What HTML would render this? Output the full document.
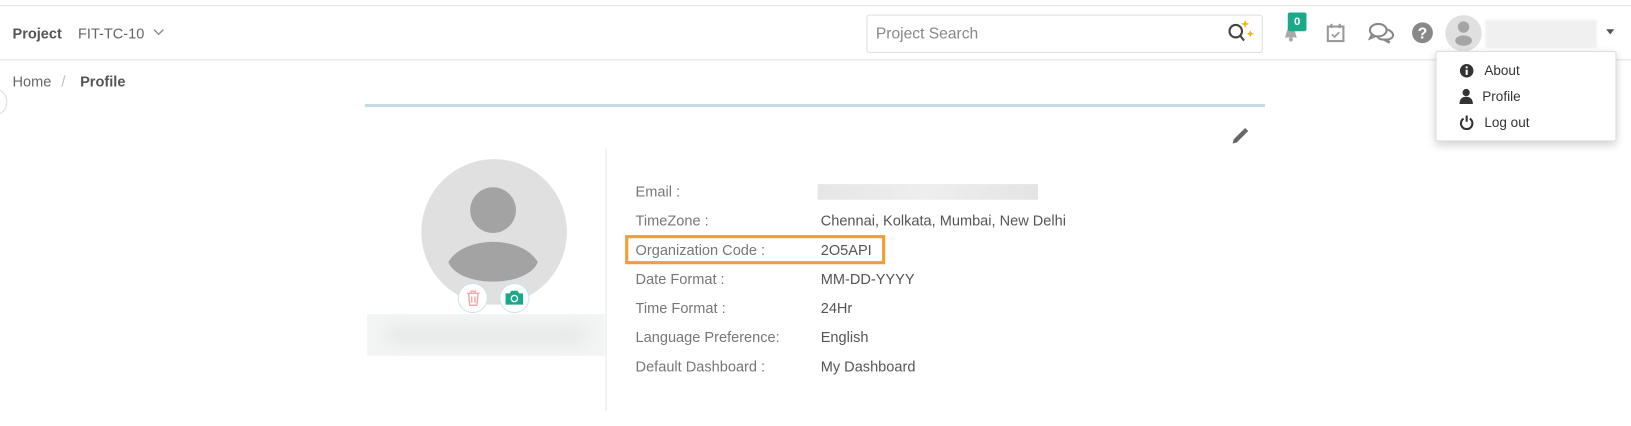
<!DOCTYPE html>
<html><head><meta charset="utf-8"><style>
*{box-sizing:border-box;margin:0;padding:0}
body{width:1631px;height:426px;background:#fff;font-family:"Liberation Sans",sans-serif;color:#555;position:relative;overflow:hidden;font-size:14px}
#w{position:absolute;left:0;top:0;width:1568px;height:410px;transform:scale(1.0402);transform-origin:0 0}
.a{position:absolute}
.lbl{position:absolute;left:611px;color:#777;font-size:14px}
.val{position:absolute;left:789px;color:#555;font-size:14px}
</style></head><body><div id="w">
<div class="a" style="left:0;top:5px;width:1568px;height:1px;background:#e2e2e2"></div>
<div class="a" style="left:0;top:57px;width:1568px;height:1px;background:#e2e2e2"></div>
<div class="a" style="left:12px;top:24px;font-weight:bold;color:#555;font-size:14px">Project</div>
<div class="a" style="left:75px;top:24px;color:#666;font-size:14px">FIT-TC-10</div>
<svg class="a" style="left:147px;top:27px" width="11" height="8"><path d="M1 1.5L5.5 6 10 1.5" stroke="#888" fill="none" stroke-width="1.3"/></svg>
<div class="a" style="left:833px;top:14px;width:381px;height:37px;border:1px solid #ddd;border-radius:3px"></div>
<div class="a" style="left:842px;top:24px;color:#888;font-size:15px">Project Search</div>
<svg class="a" style="left:1178px;top:16px" width="30" height="28"><circle cx="10" cy="14" r="6" stroke="#444" stroke-width="2" fill="none"/><path d="M14 18l4 5" stroke="#444" stroke-width="2"/><path d="M19 3l1 3 3 1-3 1-1 3-1-3-3-1 3-1z" fill="#f5b400"/><path d="M24 13l1 2.5 2.5 1-2.5 1-1 2.5-1-2.5-2.5-1 2.5-1z" fill="#f5b400"/></svg>
<svg class="a" style="left:1232px;top:22px" width="18" height="20"><path d="M3 14c2-2 1-9 6-9s4 7 6 9z" fill="#aaa"/><circle cx="9" cy="16" r="2" fill="#aaa"/></svg>
<div class="a" style="left:1238px;top:12px;width:18px;height:18px;background:#1aaa8a;border-radius:2px;color:#fff;font-size:11px;font-weight:bold;text-align:center;line-height:18px">0</div>
<svg class="a" style="left:1275px;top:22px" width="18" height="20"><rect x="1.5" y="3.5" width="15" height="14" fill="none" stroke="#999" stroke-width="2"/><path d="M5 1v4M13 1v4" stroke="#999" stroke-width="2"/><path d="M5.5 11l2.5 2.5 4.5-4.5" stroke="#999" stroke-width="1.6" fill="none"/></svg>
<svg class="a" style="left:1315px;top:20px" width="28" height="22"><ellipse cx="10" cy="9" rx="8" ry="6" fill="none" stroke="#888" stroke-width="2"/><path d="M4 13l-2 4 5-2" fill="none" stroke="#888" stroke-width="2"/><path d="M17 8c5 1 8 4 7 7-1 2-3 3-6 3l3 3-6-3c-3 0-5-1-6-3" fill="none" stroke="#888" stroke-width="2"/></svg>
<svg class="a" style="left:1357px;top:21px" width="21" height="21"><circle cx="10.5" cy="10.5" r="10" fill="#888"/><text x="10.5" y="16" font-family="Liberation Sans" font-weight="bold" font-size="15" fill="#fff" text-anchor="middle">?</text></svg>
<svg class="a" style="left:1389px;top:14px" width="36" height="36"><circle cx="18" cy="18" r="17.5" fill="#e0e0e0"/><circle cx="18" cy="12" r="5.5" fill="#a5a5a5"/><ellipse cx="18" cy="25" rx="8" ry="5" fill="#a5a5a5"/></svg>
<div class="a" style="left:1428px;top:19px;width:107px;height:27px;background:#f0f0f0;filter:blur(1px)"></div>
<svg class="a" style="left:1544px;top:28px" width="9" height="6"><path d="M0 0h8L4 5z" fill="#555"/></svg>
<div class="a" style="left:1380px;top:49px;width:174px;height:87px;background:#fff;border:1px solid #ddd;border-radius:2px;box-shadow:0 3px 8px rgba(0,0,0,.18)"></div>
<svg class="a" style="left:1403px;top:61px" width="14" height="14"><circle cx="7" cy="7" r="6.5" fill="#333"/><rect x="6" y="6" width="2" height="5" fill="#fff"/><circle cx="7" cy="3.8" r="1.1" fill="#fff"/></svg>
<div class="a" style="left:1427px;top:60px;color:#333;font-size:13px">About</div>
<svg class="a" style="left:1403px;top:85px" width="13" height="15"><circle cx="6.5" cy="4" r="3.5" fill="#333"/><path d="M0 15c0-5 3-7 6.5-7s6.5 2 6.5 7z" fill="#333"/></svg>
<div class="a" style="left:1425px;top:85px;color:#333;font-size:13px">Profile</div>
<svg class="a" style="left:1403px;top:110px" width="14" height="15"><path d="M4 4a5.5 5.5 0 1 0 6 0" fill="none" stroke="#333" stroke-width="2"/><path d="M7 1v6" stroke="#333" stroke-width="2"/></svg>
<div class="a" style="left:1427px;top:110px;color:#333;font-size:13px">Log out</div>
<div class="a" style="left:12px;top:70px;color:#666;font-size:14px">Home</div>
<div class="a" style="left:59px;top:70px;color:#bbb;font-size:14px">/</div>
<div class="a" style="left:77px;top:70px;color:#555;font-weight:bold;font-size:14px">Profile</div>
<div class="a" style="left:-12px;top:86px;width:19px;height:24px;border:1px solid #ddd;border-radius:50%"></div>
<div class="a" style="left:351px;top:100px;width:865px;height:3px;background:#c5dbe4"></div>
<svg class="a" style="left:1183px;top:122px" width="18" height="18"><path d="M2 16l1-4 9-9 3 3-9 9z" fill="#666"/><path d="M12 3l2-2 3 3-2 2z" fill="#666"/></svg>
<div class="a" style="left:582px;top:143px;width:1px;height:252px;background:#e5e5e5"></div>
<svg class="a" style="left:400px;top:150px" width="150" height="155"><circle cx="75" cy="73" r="70" fill="#e0e0e0"/><circle cx="74" cy="52" r="22" fill="#a3a3a3"/><path d="M31 102c15-26 71-26 86 0c-10 25-76 25-86 0z" fill="#a3a3a3"/></svg>
<div class="a" style="left:440px;top:272px;width:29px;height:29px;border-radius:50%;background:#fff;border:1px solid #cfe0ea"></div>
<svg class="a" style="left:448px;top:279px" width="14" height="16"><path d="M1 3h12M5 3V1h4v2M2.5 3.5l1 11h7l1-11M5.5 6v6M8.5 6v6" stroke="#f4a5a5" stroke-width="1.3" fill="none"/></svg>
<div class="a" style="left:480px;top:272px;width:29px;height:29px;border-radius:50%;background:#fff;border:1px solid #cfe0ea"></div>
<svg class="a" style="left:486px;top:279px" width="17" height="14"><path d="M0 3h4l1.5-2.5h6L13 3h4v11H0z" fill="#1aa88a"/><circle cx="8.5" cy="8" r="3" fill="none" stroke="#fff" stroke-width="1.3"/></svg>
<div class="a" style="left:353px;top:302px;width:228px;height:40px;background:#f3f4f4"></div>
<div class="a" style="left:370px;top:312px;width:195px;height:20px;background:#e9eaea;filter:blur(6px);border-radius:10px"></div>
<div class="lbl" style="top:176px">Email :</div>
<div class="a" style="left:786px;top:177px;width:212px;height:15px;background:linear-gradient(90deg,#e6e6e6,#eee 50%,#e4e4e4)"></div>
<div class="lbl" style="top:204px">TimeZone :</div><div class="val" style="top:204px">Chennai, Kolkata, Mumbai, New Delhi</div>
<div class="a" style="left:601px;top:226px;width:250px;height:28px;border:3px solid #f49d37"></div>
<div class="lbl" style="top:232px">Organization Code :</div><div class="val" style="top:232px">2O5API</div>
<div class="lbl" style="top:260px">Date Format :</div><div class="val" style="top:260px">MM-DD-YYYY</div>
<div class="lbl" style="top:288px">Time Format :</div><div class="val" style="top:288px">24Hr</div>
<div class="lbl" style="top:316px">Language Preference:</div><div class="val" style="top:316px">English</div>
<div class="lbl" style="top:344px">Default Dashboard :</div><div class="val" style="top:344px">My Dashboard</div>
</div></body></html>
